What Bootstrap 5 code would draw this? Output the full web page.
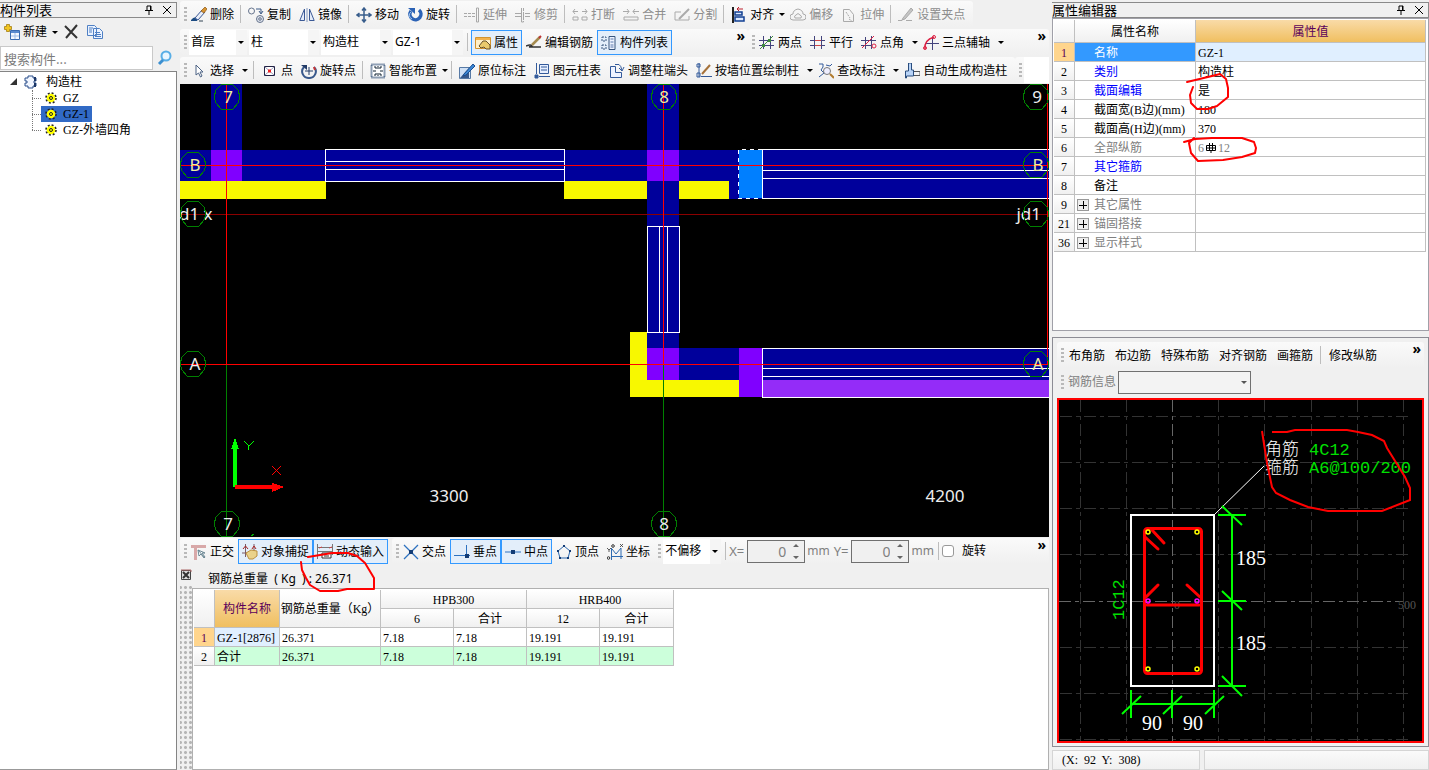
<!DOCTYPE html>
<html lang="zh-CN">
<head>
<meta charset="utf-8">
<meta name="viewport" content="width=device-width, initial-scale=1">
<title>钢筋算量 - 构造柱</title>
<link href="https://cdn.jsdelivr.net/npm/bootstrap@5.3.0/dist/css/bootstrap.min.css" rel="stylesheet">
<style>
:root{--ui:"Noto Sans","Noto Sans CJK SC",sans-serif;--song:"Liberation Serif","Noto Sans CJK SC",serif;--line:#c0c0c0}
body{background:#f0f0f0;font:12px/18px var(--ui);color:#000;overflow:hidden}
.song{font-family:var(--song)}
.side-l{width:177px}.side-r{width:377px}
.work{margin:0 3px;min-width:0}
.dock-title{height:16px;margin-top:2px;border:1px solid #8a8a8a;border-left-width:0;font:13px/14px "Noto Sans CJK SC",sans-serif}
.icon-btn{border:0;background:none;padding:0;line-height:0;display:flex}
svg{flex:none}
.ic{width:16px;height:16px}
.strip{height:28px}
.band{height:26px;background:linear-gradient(#fafafa,#f0f0f0);border-radius:3px;padding-left:4px}
.grip{width:3px;height:15px;background:repeating-linear-gradient(#b9b9b9 0 2px,transparent 2px 4px)}
.grip.gap-after{margin-right:2px}
.tool{height:25px;padding:1px 4px 0;gap:3px;border:0;border-radius:0;font-size:12px;line-height:18px;color:#000;display:flex;align-items:center;background:none;white-space:nowrap}
.tool.on{background:#e3eefa;box-shadow:inset 0 0 0 1px #3399ff}
.tool:disabled{color:#8d8d8d;opacity:1;border:0}
.tool.plain{padding:1px 5px 0}
.arr::after{content:"";border:3px solid transparent;border-top-color:#000;border-bottom:0;margin-left:2px;margin-right:-3px}
.arr.wide::after{margin-left:5px}
.bar{width:1px;height:18px;background:#bdbdbd;margin:0 3px 0 2px}
.more{font:bold 14px/14px var(--ui);align-self:flex-start;padding:0 3px 0 0}
.combo{height:25px;border:0;border-radius:0;font-size:12px;line-height:18px;padding:0 14px 0 2px;color:#000;background:#fff url("data:image/svg+xml,%3Csvg xmlns='http://www.w3.org/2000/svg' width='11' height='25'%3E%3Cpath fill='%23f5f5f5' d='M0 0h11v25H0z'/%3E%3Cpath d='M2 11h6l-3 3z'/%3E%3C/svg%3E") right center no-repeat;background-size:auto;width:70px;margin-right:2px}
.combo.short{width:58px}
.combo.info{width:133px;height:23px;margin-left:2px;border:1px solid #707070;background-color:#f3f3f3;background-image:url("data:image/svg+xml,%3Csvg xmlns='http://www.w3.org/2000/svg' width='12' height='12'%3E%3Cpath fill='%23555' d='M3 5h6l-3 3z'/%3E%3C/svg%3E")}
.num{width:58px;height:23px;border:1px solid #707070;border-radius:0;background:#f0f0f0;font:14px/18px var(--ui);color:#808080;text-align:right;padding:0 18px 0 0;appearance:textfield;display:block}
.num::-webkit-inner-spin-button{display:none}
.num:disabled{background:#f0f0f0;opacity:1}
.num-box{margin:0 2px 0 3px}
.spin{right:5px;top:3px;width:8px;height:17px}
.tick{width:12px;height:12px;border:1px solid #999;border-radius:0;margin:0 8px 0 0}
.off{color:#808080}.off.big{font-size:13px}
.find{height:24px;border:1px solid #c9c9c9;border-radius:0;font:13px/18px "Noto Sans CJK SC",sans-serif;padding:0 3px;min-width:0}
.find::placeholder{color:#7b7b7b;opacity:1}
.list-tree{border:1px solid #848484;border-left:0;border-bottom-color:#999;margin-top:1px;padding-top:2px}
.node{height:16px;line-height:16px;display:flex;align-items:center}
.twig{margin-left:32px;position:relative}
.twig::before{content:"";position:absolute;left:0;top:0;bottom:8px;border-left:1px dotted #777}
.twig .node::before{content:"";width:9px;border-top:1px dotted #777}
.leaf{padding:0 3px 0 4px;display:flex;align-items:center;gap:6px;color:#000;text-decoration:none}
.leaf.sel{background:#316ac5}
.plan{background:#000;min-height:0}
.plan svg,.sect svg{display:block;width:100%;height:100%}
.grid-t{border-collapse:separate;border-spacing:0;table-layout:fixed;font-size:12px;line-height:16px;font-family:var(--song)}
.grid-t th,.grid-t td{border:0 solid var(--line);border-width:0 1px 1px 0;padding:1px 2px 0;font-weight:400;white-space:nowrap;background:#fff;overflow:hidden}
.grid-t tr{height:19px}
.grid-t thead th,.grid-t tbody th{text-align:center;background:linear-gradient(#fff,#f0f0f0);padding:1px 0 0}
.grid-t thead .hot{background:linear-gradient(#f9dba8,#f0bf60);color:#5a005a}
.grid-t tbody th.hot{background:#ffd58d;color:#5a005a}
.grid-t .lit{background:#e0efff}
.grid-t .sum td{background:#ccffdb}
.weights{width:480px}
.props{width:372px}.props thead tr{height:23px}
.props td:nth-child(2){padding-left:19px}
.props .cur{background:#3399ff;color:#fff}
.props .key{color:#0000ff}.props .dim{color:#808080}
.props td.fold{padding-left:2px}
.plus{width:12px;height:12px;border:1px solid #999;background:#eee;padding:0;margin-right:5px;display:inline-flex;vertical-align:-1px}
.pane{border:1px solid #b0b0b0;background:#fff;padding:1px}
.props-pane{height:313px;border-color:#a0a0a8}
.section-pane{border:1px solid #8c8c94;padding:4px 4px 3px;margin:6px 0 3px;min-height:0}
.info-row{margin-bottom:2px}
.sect{border:2px solid #f00;background:#000;min-height:0}
.ink{fill:none;stroke:#f00;stroke-width:2;stroke-linecap:round;stroke-linejoin:round;pointer-events:none;overflow:visible}
.status{height:20px}.status>div{border:1px solid #d5d5d5;background:linear-gradient(#fafafa,#f0f0f0);padding-left:9px;line-height:18px;height:20px}
.pos-cell{width:148px}
.bottom{height:233px}
.dots{width:12px;background:radial-gradient(circle,#b5b5b5 1px,transparent 2px) 3px 0/5px 5px}
.total{height:23px;padding-left:16px;line-height:28px}
</style>
</head>
<body>
<svg width="0" height="0" class="position-absolute" aria-hidden="true"><defs>
<symbol id="brush" viewBox="0 0 16 16"><path d="M0 13q3-4 7-2l-1 3H0" fill="#1b4b82"/><path d="M4 11L11 3l3 2-7 8z" fill="#e9eef8" stroke="#3c5a96"/><path d="M10 4l4-4 2 2-3 4z" fill="#d79431" stroke="#8a5414" stroke-width=".7"/><path d="M8 14h4" stroke="#345"/></symbol>
<symbol id="copy1" viewBox="0 0 16 16" fill="none" stroke="#66748c"><circle cx="3.500" cy="4" r="3"/><circle cx="12" cy="12" r="3.500" fill="#dfe4ee"/><circle cx="12" cy="12" r="1.300"/><path d="M8 2h5v4M11 4l2 3 2-3" stroke="#3c5a86"/></symbol>
<symbol id="mirror" viewBox="0 0 16 16" fill="none" stroke="#3c5a96"><path d="M5.500 2v11.500H.8zM10.500 2v11.500h4.700z" fill="#e4ecfa"/><path d="M8 1v14" stroke="#8298c0"/></symbol>
<symbol id="move" viewBox="0 0 16 16" fill="none" stroke="#385d8c" stroke-width="1.500"><path d="M8 1v14M1 8h14M6 3.500L8 1l2 2.500M6 12.500L8 15l2-2.500M3.500 6L1 8l2.500 2M12.500 6L15 8l-2.500 2"/></symbol>
<symbol id="rot" viewBox="0 0 16 16"><path d="M4 4a5.500 5.500 0 1 0 8-1" fill="none" stroke="#2b62b5" stroke-width="3.500"/><path d="M4 5a4 4 0 0 0 1 7" fill="none" stroke="#9fc4f0"/><path d="M1 1h7v6z" fill="#2b62b5"/></symbol>
<symbol id="ext" viewBox="0 0 16 16" fill="none" stroke="#a8a8a8"><path d="M0 6.500h7M0 9.500h7M8 6.500h4M8 9.500h4" stroke-dasharray="3 1"/><path d="M12.500 1h2v14h-2z"/></symbol>
<symbol id="trim" viewBox="0 0 16 16" fill="none" stroke="#a8a8a8"><path d="M0 6.500h7M0 9.500h7M6.500 1v14h2V1M10 6.500h5M10 9.500h5" stroke-dasharray="8 1"/></symbol>
<symbol id="brk" viewBox="0 0 16 16" fill="none" stroke="#aaa"><path d="M1 4.500h5M10 4.500h5M3 2L1 4.500 3 7M13 2l2 2.500L13 7M1 10h5v3H1zM10 10h5v3h-5z"/></symbol>
<symbol id="mrg" viewBox="0 0 16 16" fill="none" stroke="#aaa"><path d="M0 4.500h6M10 4.500h6M4 2l2 2.500L4 7M12 2l-2 2.500L12 7M1 13v-3h14v3z"/></symbol>
<symbol id="split" viewBox="0 0 16 16" fill="none" stroke="#aaa"><path d="M1 5h6M1 13h14V9M1 5v8"/><path d="M5 12L15 2" stroke-width="2"/></symbol>
<symbol id="align" viewBox="0 0 16 16"><path d="M2 0v16" stroke="#222" stroke-width="2"/><path d="M4 5h7v3H4zM4 10h9v4H4z" fill="#dce9ff" stroke="#113f92" stroke-width="1.500"/><path d="M12 2H6m2-2L6 2l2 2" stroke="#bd1f2d" fill="none"/></symbol>
<symbol id="offs" viewBox="0 0 16 16" fill="none" stroke="#aaa"><path d="M3 13a3 3 0 0 1 0-6q0-4 5-5 5 1 5 5a3 3 0 0 1 0 6z"/><path d="M5 11a2 2 0 0 1 1-3q2-3 4 0a2 2 0 0 1 1 3z"/></symbol>
<symbol id="stretch" viewBox="0 0 16 16" fill="none" stroke="#aaa"><path d="M2.500 2.500h6l4 5v7h-10z"/><path d="M5 5l4 6M8 12l3 2" stroke-dasharray="2 1"/></symbol>
<symbol id="pinch" viewBox="0 0 16 16" fill="none" stroke="#aaa"><path d="M0 13.500h4M8 13.500h6"/><path d="M5 11L13 1l2 2-8 9-3 1z" fill="#c5c5c5"/></symbol>
<symbol id="prop" viewBox="0 0 16 16"><path d="M.5 2.500h15v11H.5z" fill="#fff0c8" stroke="#d39430"/><path d="M1 3h14v2H1z" fill="#f3b24c"/><path d="M4 11l4-5 3 0 4 4v4h-4l-2-2-3 1z" fill="#e9ca6d" stroke="#67512b"/></symbol>
<symbol id="rebar" viewBox="0 0 16 16" fill="none"><path d="M0 11q5-2 6 0l-3 1h12" stroke="#333" stroke-width="1.500"/><path d="M6 10L14 2" stroke="#a58b4f" stroke-width="2.500"/><path d="M13 3l2-2" stroke="#b33" stroke-width="2"/></symbol>
<symbol id="listic" viewBox="0 0 16 16"><path d="M1 2h4v4H1zM1 10h4v4H1z" fill="none" stroke="#36547d" stroke-dasharray="2 1"/><path d="M8 1.500h6v13H8z" fill="#edf3ff" stroke="#36547d"/><path d="M9.500 4h3M9.500 7h3M9.500 10h3M9.500 12h3" stroke="#5a78aa"/></symbol>
<symbol id="two" viewBox="0 0 16 16" fill="none" stroke="#44447d"><path d="M4.500 1v13M11.500 1v13M0 5.500h15M0 10.500h15"/><path d="M1 14L14 1" stroke="#3d8a3d"/><path d="M3 9h3v3H3zM9 4h3v3H9z" fill="#3d8a3d" stroke="none"/></symbol>
<symbol id="par" viewBox="0 0 16 16" fill="none" stroke="#44447d"><path d="M4.500 1v13M11.500 1v13M0 5.500h15M0 10.500h15"/><path d="M5 5.500h6M5 10.500h6" stroke="#c44"/></symbol>
<symbol id="ang" viewBox="0 0 16 16" fill="none" stroke="#44447d"><path d="M4.500 2v12M10.500 1v13M0 5.500h15M0 10.500h10"/><path d="M1 13L13 1" stroke="#d24"/><circle cx="13" cy="11" r="2" stroke="#d24"/></symbol>
<symbol id="three" viewBox="0 0 16 16" fill="none" stroke="#44447d"><path d="M9.500 2v13M2 8.500h14"/><path d="M2 14q-1-9 9-12" stroke="#d24" stroke-width="1.500"/><circle cx="11" cy="2" r="1.500" stroke="#d24"/><circle cx="2" cy="13" r="1.500" stroke="#d24"/></symbol>
<symbol id="cursor" viewBox="0 0 16 16"><path d="M5 2v10l2.500-2 2 4 1.500-1-2-4h3z" fill="#fff" stroke="#4d6384"/></symbol>
<symbol id="pt" viewBox="0 0 16 16"><path d="M2.500 3.500h10v9h-10z" fill="#fff" stroke="#224"/><path d="M3 4l9 8M12 4l-9 8" stroke="#88a" stroke-width=".8"/><path d="M6 6.500h3v3H6z" fill="#e22"/></symbol>
<symbol id="rotpt" viewBox="0 0 16 16" fill="none"><path d="M3 4a6.500 6.500 0 0 0 5 11M8 15a6.500 6.500 0 0 0 5-11" stroke="#39598c" stroke-width="2"/><path d="M0 2h6v5z" fill="#223c68"/><path d="M8 4v8M4 8h8" stroke="#223c68"/><path d="M13 4l1 3" stroke="#c33" stroke-width="2"/></symbol>
<symbol id="smart" viewBox="0 0 16 16"><path d="M1.500 1.500h13v13h-13z" fill="#fff" stroke="#24456f" stroke-width="2" stroke-dasharray="1 1"/><path d="M8 3v3M8 10v3M3 8h3M10 8h3M4 4h2v2M12 4h-2v2M4 12h2v-2M12 12h-2v-2" fill="none" stroke="#123"/></symbol>
<symbol id="mark1" viewBox="0 0 16 16"><path d="M.5 4.500h11v11H.5z" fill="#cfe0f5" stroke="#587aa5"/><path d="M1 15L10 5v10z" fill="#37598c"/><path d="M5 11L14 1l2 2-9 9-3 1z" fill="#3c87d4" stroke="#1c4f91"/></symbol>
<symbol id="tbl" viewBox="0 0 16 16" fill="none" stroke="#335a9b"><path d="M5.500 1.500h9v9h-9z" fill="#e7efff"/><path d="M7 4h6M7 7h6M2.500 0v11M5 13.500h11"/><path d="M1 12h3v3H1z" fill="#335a9b"/></symbol>
<symbol id="adj" viewBox="0 0 16 16" fill="#eef3ff" stroke="#335a9b"><path d="M1.500 3.500h5v6h6v5h-11z"/><path d="M6 1.500h4q2 1 3 6M10 5l3 3 2-4" fill="none"/></symbol>
<symbol id="wallp" viewBox="0 0 16 16" fill="none" stroke="#335a9b"><path d="M3 0v14M5 13.500h11M1 1h3v3H1zM1 10h3v4H1z"/><path d="M6 11L14 2" stroke="#a5713a" stroke-width="2"/></symbol>
<symbol id="check" viewBox="0 0 16 16" fill="none" stroke="#335a9b"><path d="M1 1h4v3L3 7l3 3-5 4M8 2l4 1 2-2"/><circle cx="9" cy="8" r="3.500" fill="#eef" stroke="#777"/><path d="M12 11l4 4" stroke="#b17b2d" stroke-width="2"/></symbol>
<symbol id="auto" viewBox="0 0 16 16"><path d="M4.500 0h3v7h2v6h-7v2h-1V8h3z" fill="#b9d4f7" stroke="#294c7d"/><path d="M10 8.500h6v4h-6" fill="none" stroke="#555"/></symbol>
<symbol id="ortho" viewBox="0 0 16 16"><path d="M0 1h15v3H6v12H3V4H0z" fill="#d8a8a8"/><path d="M7 6l7 8M7 6l1 6 2-2 3 4 1-1-3-4 3 0z" fill="#fff" stroke="#6b8793"/></symbol>
<symbol id="snap" viewBox="0 0 16 16"><path d="M3.500 0v13M0 9h15M12 0v8" stroke="#7b5b65" fill="none"/><path d="M1 5l2.500-3L6 5M10 5l2-3 2 3" stroke="#a22" fill="none"/><path d="M4 9l5-3 6 1v5l-4 3H7z" fill="#ead28a" stroke="#bb8f3f"/></symbol>
<symbol id="dyn" viewBox="0 0 16 16" fill="none" stroke="#777"><path d="M.5 0v15M15.500 0v11M1 3.500h14M1 7.500h14"/><path d="M2 4l3-1M12 4l3-1" stroke="#c44"/><path d="M5 9h9v5H5z" fill="#fff" stroke="#333"/><path d="M7 12h5" stroke="#333"/></symbol>
<symbol id="inter" viewBox="0 0 16 16"><path d="M1 1l14 14M15 1L1 15" stroke="#2e72c0" stroke-width="1.300"/><path d="M6 6h4v4H6z" fill="#133c75"/></symbol>
<symbol id="perp" viewBox="0 0 16 16"><path d="M0 11.500h16M12.500 1v13" stroke="#2e72c0"/><path d="M11 10h4v4h-4z" fill="#133c75"/></symbol>
<symbol id="mid" viewBox="0 0 16 16"><path d="M0 8h16" stroke="#2e72c0"/><path d="M6 6h4v4H6z" fill="#133c75"/></symbol>
<symbol id="vert" viewBox="0 0 16 16"><path d="M8 2l6 5-2 7H4L2 7z" fill="none" stroke="#2e6ab0"/><path d="M7 1h2v2H7zM1 6h2v2H1zM13 6h2v2h-2zM3 13h2v2H3zM11 13h2v2h-2z" fill="#133c75"/></symbol>
<symbol id="coord" viewBox="0 0 16 16" fill="none" stroke="#2e6ab0"><path d="M4.500 4v12M4 12.500h12M5 5l4 5 5-6M14 4v11"/><path d="M0 4l2 2 2-2M2 6v2M13 0l3 3M16 0l-3 3" stroke="#333" stroke-width=".8"/><circle cx="6" cy="2" r="1.300" stroke="#333"/><circle cx="1.500" cy="14" r="1.300" stroke="#333"/></symbol>
<symbol id="new" viewBox="0 0 16 16"><path d="M6.500 6.500h9v9h-9z" fill="#f4f8ff" stroke="#3b6cb2"/><path d="M7 7h8v2H7z" fill="#5b8bd0"/><path d="M7 12h8M11 9v6" stroke="#9fbce6"/><path d="M2.500.5h3v2h2v3h-2v2h-3v-2h-2v-3h2z" fill="#f1c51f" stroke="#a57d13" stroke-width=".8"/></symbol>
<symbol id="del" viewBox="0 0 16 16"><path d="M2 2l12 12M14 1L3 14" stroke="#333" stroke-width="2"/></symbol>
<symbol id="copy2" viewBox="0 0 16 16" fill="#eaf2ff" stroke="#4f80c4"><path d="M.5 1.500h7l2 2v8h-9zM6.500 4.500h6l3 3v7h-9z"/><path d="M2 4h4M2 6h3M2 8h3M8 8.500h5M8 10.500h6M8 12.500h6"/></symbol>
<symbol id="gear" viewBox="0 0 12 12"><circle cx="6" cy="6" r="4.800" fill="none" stroke="#222" stroke-width="2" stroke-dasharray="1.900 1.870"/><circle cx="6" cy="6" r="4.300" fill="#ff0"/><circle cx="6" cy="6" r="1.500" fill="#ff0" stroke="#222"/></symbol>
<symbol id="pin" viewBox="0 0 10 10"><path d="M3 1h4v4.500H3zM1 5.500h8M5 6v4M6.500 1v4" fill="none" stroke="#000"/></symbol>
<symbol id="x" viewBox="0 0 10 10"><path d="M1 1l8 8M9 1L1 9" stroke="#000"/></symbol>
<symbol id="col" viewBox="0 0 14 14"><path d="M4 1h5v2h3v3h-2v2h2v3H9v2H4v-2H1V8h2V6H1V3h3z" fill="#f1f6ff" stroke="#2b4f8b"/><path d="M11 2v4M11 8v4" stroke="#1b3565" stroke-width="2"/></symbol>
<symbol id="ax" viewBox="-14 -14 28 28"><path d="M0-13l6 1 5 5 2 7-2 6-5 6-6 1-6-1-5-6-2-6 2-7 5-5z" fill="none" stroke="#008000"/></symbol>
</defs></svg>

<div class="d-flex vh-100">
<aside class="side-l d-flex flex-column flex-shrink-0">
  <div class="dock-title d-flex align-items-center"><span class="flex-fill">构件列表</span><button class="icon-btn me-2" aria-label="固定"><svg width="10" height="10"><use href="#pin"/></svg></button><button class="icon-btn me-1" aria-label="关闭"><svg width="10" height="10"><use href="#x"/></svg></button></div>
  <div class="strip d-flex align-items-center ps-1"><button class="tool arr p-0 me-2"><svg class="ic"><use href="#new"/></svg>新建</button><button class="icon-btn me-2" aria-label="删除构件"><svg class="ic"><use href="#del"/></svg></button><button class="icon-btn" aria-label="复制构件"><svg class="ic"><use href="#copy2"/></svg></button></div>
  <div class="d-flex"><input class="form-control find flex-fill" type="search" placeholder="搜索构件..." aria-label="搜索构件"><button class="icon-btn px-1 align-items-center" aria-label="搜索"><svg class="ic" viewBox="0 0 16 16"><circle cx="9" cy="6" r="4.500" fill="#e9f6ff" stroke="#58aee6" stroke-width="2"/><path d="M6 10l-4 4" stroke="#3b8fd0" stroke-width="3"/></svg></button></div>
  <div class="list-tree bg-white flex-fill song">
    <div class="node ps-2"><svg width="12" height="10"><path d="M9 1v7H2z" fill="#333"/></svg><svg class="ms-1 me-2" width="14" height="14"><use href="#col"/></svg>构造柱</div>
    <div class="twig">
      <div class="node"><a href="#" class="leaf"><svg width="12" height="12"><use href="#gear"/></svg>GZ</a></div>
      <div class="node"><a href="#" class="leaf sel"><svg width="12" height="12"><use href="#gear"/></svg>GZ-1</a></div>
      <div class="node"><a href="#" class="leaf"><svg width="12" height="12"><use href="#gear"/></svg>GZ-外墙四角</a></div>
    </div>
  </div>
</aside>

<main class="work flex-fill d-flex flex-column">
  <div class="strip d-flex align-items-center"><div class="band d-flex align-items-center pe-1"><span class="grip"></span>
    <button class="tool"><svg class="ic"><use href="#brush"/></svg>删除</button><span class="bar"></span>
    <button class="tool"><svg class="ic"><use href="#copy1"/></svg>复制</button><button class="tool"><svg class="ic"><use href="#mirror"/></svg>镜像</button><span class="bar"></span>
    <button class="tool"><svg class="ic"><use href="#move"/></svg>移动</button><button class="tool"><svg class="ic"><use href="#rot"/></svg>旋转</button><span class="bar"></span>
    <button class="tool" disabled><svg class="ic"><use href="#ext"/></svg>延伸</button><button class="tool" disabled><svg class="ic"><use href="#trim"/></svg>修剪</button><span class="bar"></span>
    <button class="tool" disabled><svg class="ic"><use href="#brk"/></svg>打断</button><button class="tool" disabled><svg class="ic"><use href="#mrg"/></svg>合并</button><button class="tool" disabled><svg class="ic"><use href="#split"/></svg>分割</button><span class="bar"></span>
    <button class="tool arr"><svg class="ic"><use href="#align"/></svg>对齐</button><button class="tool" disabled><svg class="ic"><use href="#offs"/></svg>偏移</button><button class="tool" disabled><svg class="ic"><use href="#stretch"/></svg>拉伸</button><span class="bar"></span>
    <button class="tool" disabled><svg class="ic"><use href="#pinch"/></svg>设置夹点</button></div></div>
  <div class="strip d-flex align-items-center"><div class="band d-flex align-items-center flex-fill"><span class="grip gap-after"></span>
    <select class="form-select combo short" aria-label="楼层"><option>首层</option></select><select class="form-select combo" aria-label="构件大类"><option>柱</option></select><select class="form-select combo" aria-label="构件类型"><option>构造柱</option></select><select class="form-select combo" aria-label="构件"><option>GZ-1</option></select><span class="bar"></span>
    <button class="tool on"><svg class="ic"><use href="#prop"/></svg>属性</button><button class="tool"><svg class="ic"><use href="#rebar"/></svg>编辑钢筋</button><button class="tool on"><svg class="ic"><use href="#listic"/></svg>构件列表</button><button class="icon-btn more ms-auto" aria-label="更多">»</button></div>
    <div class="band d-flex align-items-center" style="width:301px"><span class="grip"></span>
    <button class="tool"><svg class="ic"><use href="#two"/></svg>两点</button><button class="tool"><svg class="ic"><use href="#par"/></svg>平行</button><button class="tool arr wide"><svg class="ic"><use href="#ang"/></svg>点角</button><button class="tool arr wide"><svg class="ic"><use href="#three"/></svg>三点辅轴</button><button class="icon-btn more ms-auto" aria-label="更多">»</button></div></div>
  <div class="strip d-flex align-items-center"><div class="band d-flex align-items-center pe-1"><span class="grip"></span>
    <button class="tool arr wide"><svg class="ic"><use href="#cursor"/></svg>选择</button><span class="bar mx-1"></span>
    <button class="tool"><svg class="ic"><use href="#pt"/></svg>点</button><button class="tool"><svg class="ic"><use href="#rotpt"/></svg>旋转点</button><span class="bar"></span>
    <button class="tool arr"><svg class="ic"><use href="#smart"/></svg>智能布置</button><span class="bar"></span>
    <button class="tool"><svg class="ic"><use href="#mark1"/></svg>原位标注</button><button class="tool"><svg class="ic"><use href="#tbl"/></svg>图元柱表</button><button class="tool"><svg class="ic"><use href="#adj"/></svg>调整柱端头</button><button class="tool arr wide"><svg class="ic"><use href="#wallp"/></svg>按墙位置绘制柱</button><button class="tool arr wide"><svg class="ic"><use href="#check"/></svg>查改标注</button><button class="tool"><svg class="ic"><use href="#auto"/></svg>自动生成构造柱</button></div>
    <div class="band d-flex align-items-center flex-fill"><span class="grip gap-after"></span><span class="bg-white flex-fill h-100"></span></div></div>

  <div class="plan flex-fill"><svg viewBox="180 84 869 453" preserveAspectRatio="xMidYMid slice" shape-rendering="crispEdges" role="img" aria-label="平面图">
    <g fill="#00009b"><path d="M211 84h31v97h-31zM180 150h582v31H180zM729 150h33v49h-33zM647 84h32v296h-32zM762 150h287v49H762zM647 348h402v32H647z"/></g>
    <path d="M211 150h31v31h-31zM647 150h32v31h-32zM647 348h32v32h-32zM739 348h23v49h-23z" fill="#8000ff"/><path d="M762 380h287v17H762z" fill="#942cf8"/>
    <path d="M180 181h146v18H180zM564 181h83v18h-83zM679 181h50v18h-50zM630 332h17v48h92v17H630z" fill="#f8f800"/>
    <path d="M739 150h23v48h-23z" fill="#007fff"/>
    <g fill="none" stroke="#fff"><path d="M325.500 149.500h239v32h-239zM325 161.500h240M325 169.500h240M1050 149.500H762.500v49H1050M762 170.500h288M762 178.500h288M647.500 226.500h32v106h-32zM659.500 226v106M667.500 226v106M1050 348.500H762.500v49H1050M762 368.500h288M762 376.500h288"/><path d="M762 149.500h-23.500v49H762" stroke-dasharray="4 4"/></g>
    <path d="M226.500 365v172M663.500 365v172" stroke="#008000"/><path d="M180 214.500h869" stroke="#8b0000"/>
    <path d="M226.500 84v281M663.500 84v281M1047.500 84v281M180 165.500h869M180 364.500h869" stroke="#f00"/>
    <g font-family="Noto Sans" font-size="17" text-anchor="middle" fill="#eee"><g fill="#eeee9c"><text x="228" y="103">7</text><text x="195" y="171">B</text><text x="664" y="103">8</text><text x="1038" y="171">B</text><text x="1038" y="370">A</text></g><text x="1037" y="103">9</text><text x="195" y="370">A</text><text x="228" y="530">7</text><text x="664" y="530">8</text><text x="449" y="502">3300</text><text x="945" y="502">4200</text><text x="179" y="220" text-anchor="start">d1 x</text><text x="1041" y="220" text-anchor="end">jd1</text></g>
    <g><use href="#ax" x="213" y="83" width="28" height="28"/><use href="#ax" x="179" y="151" width="28" height="28"/><use href="#ax" x="179" y="200" width="28" height="28"/><use href="#ax" x="179" y="350" width="28" height="28"/><use href="#ax" x="213" y="510" width="28" height="28"/><use href="#ax" x="650" y="83" width="28" height="28"/><use href="#ax" x="650" y="510" width="28" height="28"/><use href="#ax" x="1022" y="83" width="28" height="28"/><use href="#ax" x="1022" y="151" width="28" height="28"/><use href="#ax" x="1022" y="200" width="28" height="28"/><use href="#ax" x="1022" y="350" width="28" height="28"/></g>
    <path d="M233 487v-38h-2l4-11 4 11h-2v38z" fill="#0f0"/><path d="M235 485h37v-2l12 4-12 5v-3h-37z" fill="#f00"/><path d="M244 441l5 5 5-5M248.500 446v4" fill="none" stroke="#0f0"/><path d="M272 466l9 9M281 466l-9 9" stroke="#f00"/><path d="M251 536l3-2" stroke="#0a0"/>
  </svg></div>

  <div class="bottom d-flex flex-column flex-shrink-0 position-relative">
    <div class="strip d-flex align-items-center"><div class="band d-flex align-items-center"><span class="grip"></span>
      <button class="tool"><svg class="ic"><use href="#ortho"/></svg>正交</button><button class="tool on"><svg class="ic"><use href="#snap"/></svg>对象捕捉</button><button class="tool on"><svg class="ic"><use href="#dyn"/></svg>动态输入</button></div>
      <div class="band d-flex align-items-center ms-1"><span class="grip"></span>
      <button class="tool"><svg class="ic"><use href="#inter"/></svg>交点</button><button class="tool on"><svg class="ic"><use href="#perp"/></svg>垂点</button><button class="tool on"><svg class="ic"><use href="#mid"/></svg>中点</button><button class="tool"><svg class="ic"><use href="#vert"/></svg>顶点</button><button class="tool"><svg class="ic"><use href="#coord"/></svg>坐标</button></div>
      <div class="band d-flex align-items-center flex-fill"><span class="grip gap-after"></span>
      <select class="form-select combo short" aria-label="偏移方式"><option>不偏移</option></select><span class="bar"></span>
      <label class="off big" for="dx">X=</label><span class="num-box position-relative"><input id="dx" class="num" type="number" value="0" disabled><svg class="spin position-absolute" viewBox="0 0 8 17"><path d="M1 4h6L4 1zM1 13h6l-3 3z" fill="#666"/></svg></span><span class="off">mm</span>
      <label class="off big ms-1" for="dy">Y=</label><span class="num-box position-relative"><input id="dy" class="num" type="number" value="0" disabled><svg class="spin position-absolute" viewBox="0 0 8 17"><path d="M1 4h6L4 1zM1 13h6l-3 3z" fill="#666"/></svg></span><span class="off">mm</span><span class="bar ms-1"></span>
      <input id="turn" class="form-check-input tick" type="checkbox"><label for="turn">旋转</label><button class="icon-btn more ms-auto" aria-label="更多">»</button></div></div>
    <div class="d-flex flex-fill" style="min-height:0">
      <div class="d-flex flex-column pt-1"><button class="icon-btn mb-1" aria-label="关闭结果窗口"><svg width="12" height="12" viewBox="0 0 12 12"><path d="M1.500 1.500h9v9h-9z" fill="#ddd" stroke="#444"/><path d="M3 3l6 6M9 3L3 9" stroke="#333" stroke-width="2"/><path d="M1 1h10v2" stroke="#a66" fill="none"/></svg></button><div class="dots flex-fill"></div></div>
      <div class="flex-fill d-flex flex-column"><div class="total">钢筋总重量&nbsp; ( Kg&nbsp; ) : 26.371</div>
        <div class="pane flex-fill">
          <table class="grid-t weights"><colgroup><col style="width:21px"><col style="width:65px"><col style="width:101px"><col style="width:73px"><col style="width:73px"><col style="width:73px"><col style="width:74px"></colgroup>
          <thead><tr><th rowspan="2"></th><th rowspan="2" class="hot">构件名称</th><th rowspan="2">钢筋总重量（Kg）</th><th colspan="2">HPB300</th><th colspan="2">HRB400</th></tr><tr><th>6</th><th>合计</th><th>12</th><th>合计</th></tr></thead>
          <tbody><tr><th class="hot">1</th><td class="lit">GZ-1[2876]</td><td>26.371</td><td>7.18</td><td>7.18</td><td>19.191</td><td>19.191</td></tr><tr class="sum"><th>2</th><td>合计</td><td>26.371</td><td>7.18</td><td>7.18</td><td>19.191</td><td>19.191</td></tr></tbody></table></div></div>
    </div>
    <svg class="ink position-absolute top-0 start-0" width="200" height="60" viewBox="180 537 200 60"><path d="M301 562l1 8 4 8 4 7 10 6h18l9-2h27v-11l-9-15-8-7-9-3H332l-24 4"/></svg>
  </div>
</main>

<aside class="side-r d-flex flex-column flex-shrink-0">
  <div class="dock-title d-flex align-items-center"><span class="flex-fill">属性编辑器</span><button class="icon-btn me-2" aria-label="固定"><svg width="10" height="10"><use href="#pin"/></svg></button><button class="icon-btn me-1" aria-label="关闭"><svg width="10" height="10"><use href="#x"/></svg></button></div>
  <div class="pane props-pane position-relative flex-shrink-0">
    <table class="grid-t props"><colgroup><col style="width:21px"><col style="width:121px"><col></colgroup>
    <thead><tr><th></th><th>属性名称</th><th class="hot">属性值</th></tr></thead>
    <tbody>
    <tr><th class="hot">1</th><td class="cur">名称</td><td class="lit">GZ-1</td></tr>
    <tr><th>2</th><td class="key">类别</td><td>构造柱</td></tr>
    <tr><th>3</th><td class="key">截面编辑</td><td>是</td></tr>
    <tr><th>4</th><td>截面宽(B边)(mm)</td><td>180</td></tr>
    <tr><th>5</th><td>截面高(H边)(mm)</td><td>370</td></tr>
    <tr><th>6</th><td class="dim">全部纵筋</td><td class="dim">6<svg style="vertical-align:-1px;margin:0 2px" width="10" height="10" viewBox="0 0 10 10"><path d="M.5 2.500h9v5h-9zM3.500 0v8M6.500 0v8M5 7v3M1 5h8" fill="none" stroke="#000"/></svg>12</td></tr>
    <tr><th>7</th><td class="key">其它箍筋</td><td></td></tr>
    <tr><th>8</th><td>备注</td><td></td></tr>
    <tr><th>9</th><td class="dim fold"><button class="plus" aria-label="展开"><svg width="10" height="10"><path d="M1 5.500h8M5.500 1v8" stroke="#000"/></svg></button>其它属性</td><td></td></tr>
    <tr><th>21</th><td class="dim fold"><button class="plus" aria-label="展开"><svg width="10" height="10"><path d="M1 5.500h8M5.500 1v8" stroke="#000"/></svg></button>锚固搭接</td><td></td></tr>
    <tr><th>36</th><td class="dim fold"><button class="plus" aria-label="展开"><svg width="10" height="10"><path d="M1 5.500h8M5.500 1v8" stroke="#000"/></svg></button>显示样式</td><td></td></tr>
    </tbody></table>
    <svg class="ink position-absolute top-0 start-0" width="300" height="200" viewBox="1053 19 300 200"><path d="M1187 82l25-6 8-2 6 5 2 9v9l-11 9-9 3h-11l-6-6-1-8 3-8M1184 142l11-3 17-1h30l12 4 2 6-1 5-13 4-19 3-25 1-7-8-2-10 5-5"/></svg>
  </div>
  <div class="section-pane flex-fill d-flex flex-column">
    <div class="band d-flex align-items-center"><span class="grip"></span><button class="tool plain">布角筋</button><button class="tool plain">布边筋</button><button class="tool plain">特殊布筋</button><button class="tool plain">对齐钢筋</button><button class="tool plain">画箍筋</button><span class="bar"></span><button class="tool plain">修改纵筋</button><button class="icon-btn more ms-auto" aria-label="更多">»</button></div>
    <div class="strip info-row d-flex align-items-center ps-1"><span class="grip me-1"></span><label class="off" for="info">钢筋信息</label><select id="info" class="form-select combo info" disabled></select></div>
    <div class="sect flex-fill"><svg viewBox="1059 400 363 341" preserveAspectRatio="xMidYMid slice" role="img" aria-label="截面图">
      <g stroke="#333" stroke-dasharray="12 4 4 4"><path d="M1080.500 400v341M1126.500 400v341M1218.500 400v341M1264.500 400v341M1311.500 400v341M1357.500 400v341M1403.500 400v341M1060 416.500h351M1060 462.500h351M1060 508.500h351M1060 554.500h351M1060 647.500h351M1060 693.500h351M1060 739.500h351"/><path d="M1172.500 400v341M1059 601.500h340" stroke="#666"/></g>
      <g font-family="Liberation Serif" font-size="12" fill="#555"><text x="1398" y="609">500</text><text x="1174" y="609">0</text></g>
      <path d="M1214 515l50-49" stroke="#fff"/><path d="M1131 515h83v171h-83z" fill="none" stroke="#fff" stroke-width="2"/>
      <g fill="none" stroke="#f00" stroke-width="3" stroke-linecap="round"><rect x="1144.500" y="528.500" width="57" height="145" rx="3"/><path d="M1147 605h52M1145 537l13 12M1152 530l12 13M1145 598l13-13M1187 585l13 12"/></g>
      <g fill="none" stroke="#ff0" stroke-width="1.500"><circle cx="1148" cy="532" r="2"/><circle cx="1197" cy="532" r="2"/><circle cx="1148" cy="669" r="2"/><circle cx="1197" cy="669" r="2"/><g stroke="#f0f"><circle cx="1148" cy="601" r="2"/><circle cx="1197" cy="601" r="2"/></g></g>
      <path d="M1232 515v171M1218 515h28M1218 601h28M1218 686h28M1222 506l20 19M1222 591l20 19M1222 676l20 20M1131 704h83M1131 690v28M1172 690v28M1214 690v28M1122 714l19-18M1163 714l19-18M1205 714l19-18" stroke="#0f0" stroke-width="2"/>
      <g font-family="Liberation Serif" font-size="20" fill="#fff"><text x="1236" y="565">185</text><text x="1236" y="650">185</text><text x="1142" y="730">90</text><text x="1183" y="730">90</text></g>
      <g font-family="Liberation Serif, Noto Sans CJK SC" font-size="17" font-weight="300" fill="#fff"><text x="1265" y="455">角筋</text><text x="1265" y="473">箍筋</text></g>
      <g font-family="Liberation Mono" font-size="17" fill="#00e000"><text x="1309" y="455">4C12</text><text x="1309" y="473">A6@100/200</text><text transform="translate(1124 620) rotate(-90)">1C12</text></g>
      <path fill="none" stroke="#f00" stroke-width="2" d="M1262 431l5 32 5 24 4 6 14 7 18 7 20 4h54l28-11v-12l-5-11-18-29-3-7-12-6-14-3-11-2h-52l-8 2h-15"/>
    </svg></div>
  </div>
  <div class="status song d-flex gap-1 flex-shrink-0"><div class="pos-cell">(X:&nbsp; 92&nbsp; Y:&nbsp; 308)</div><div class="flex-fill"></div></div>
</aside>
</div>
<script src="https://cdn.jsdelivr.net/npm/bootstrap@5.3.0/dist/js/bootstrap.bundle.min.js"></script>
</body>
</html>
